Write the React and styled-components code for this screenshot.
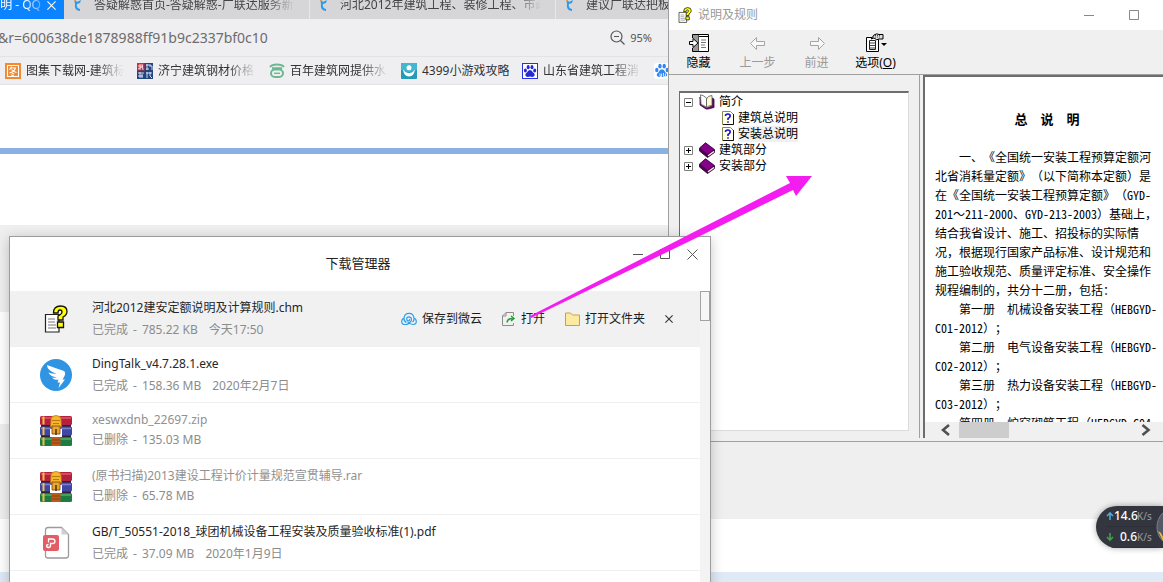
import React from 'react';
import styled, { createGlobalStyle, css } from 'styled-components';

const uiFont = '"Noto Sans", "DejaVu Sans", "Noto Sans CJK SC", sans-serif';
const songFont = '"Noto Sans CJK SC", sans-serif';

const GlobalStyle = createGlobalStyle`
  * { box-sizing: border-box; }
  body { margin: 0; font: 12px/16px ${uiFont}; color: #333; overflow: hidden; }
  button, input { font: inherit; color: inherit; border: 0; padding: 0; margin: 0; background: none; }
  button { cursor: pointer; }
  a { color: inherit; text-decoration: none; }
  svg { display: block; flex: none; }
  h1, h2, p, ul { margin: 0; padding: 0; font-size: inherit; font-weight: inherit; }
  ul { list-style: none; }
`;

const Desktop = styled.div`
  position: relative;
  height: 100vh;
  overflow: hidden;
  background: #fff;
`;

/* ---------- browser ---------- */
const Browser = styled.main`
  display: flex;
  flex-direction: column;
  height: 100%;
`;

const TabBar = styled.nav`
  display: flex;
  align-items: flex-end;
  height: 19px;
  flex: none;
  overflow: hidden;
  background: #d6d6d8;
`;

const fade = css`
  overflow: hidden;
  white-space: nowrap;
  mask-image: linear-gradient(to right, #000 calc(100% - 28px), transparent);
`;

const Tab = styled.a`
  display: flex;
  align-items: center;
  flex: none;
  gap: 11px;
  width: 246px;
  height: 28px;
  padding: 0 14px 0 9px;
  border-right: 1px solid #e8e8ea;
  color: #444;
  span { ${fade} flex: 1; }
`;

const ActiveTab = styled.div`
  display: flex;
  align-items: center;
  justify-content: flex-end;
  flex: none;
  gap: 6px;
  width: 64px;
  height: 28px;
  padding-right: 8px;
  background: #0c84ff;
  color: #fff;
  white-space: nowrap;
  span { mask-image: linear-gradient(to right, #000 60%, rgba(0, 0, 0, 0.3)); }
`;

const AddressBar = styled.div`
  display: flex;
  align-items: center;
  flex: none;
  height: 38px;
  padding-right: 511px;
  background: #efeff2;
  border-bottom: 1px solid #e3e3e6;
`;

const AddressInput = styled.input`
  flex: 1;
  min-width: 0;
  margin-left: -2px;
  font-size: 14px;
  line-height: 20px;
  color: #6c6c6c;
`;

const ZoomButton = styled.button`
  display: flex;
  align-items: center;
  gap: 5px;
  font-size: 11px;
  color: #555;
`;

const BookmarkBar = styled.nav`
  display: flex;
  align-items: center;
  flex: none;
  gap: 13px;
  height: 28px;
  padding-left: 5px;
  background: #efeff2;
  border-bottom: 1px solid #e3e3e6;
`;

const Bookmark = styled.a`
  display: flex;
  align-items: center;
  flex: none;
  gap: 5px;
  width: ${(p) => (p.$short ? '108px' : '119px')};
  span {
    flex: 1;
    overflow: hidden;
    white-space: nowrap;
    ${(p) => !p.$short && fade}
  }
`;

const Band = styled.div`
  flex: none;
  height: ${(p) => p.$h}px;
  background: ${(p) => p.$color};
`;

const LastBand = styled.div`
  flex: 1;
  background: #dfeaf6;
`;

/* ---------- help window ---------- */
const HelpWindow = styled.section`
  position: absolute;
  top: 0;
  right: 0;
  bottom: 140px;
  width: 495px;
  display: flex;
  flex-direction: column;
  background: #f0f0f0;
  border-left: 1px solid #a0a0a0;
  border-bottom: 1px solid #a0a0a0;
  color: #000;
`;

const HelpTitle = styled.header`
  display: flex;
  align-items: center;
  flex: none;
  gap: 5px;
  height: 30px;
  padding: 0 23px 0 8px;
  background: #fff;
  color: #999;
  h2 { flex: 1; }
`;

const WindowControls = styled.div`
  display: flex;
  gap: ${(p) => p.$gap}px;
`;

const Toolbar = styled.div`
  display: flex;
  flex: none;
  height: 45px;
  border-bottom: 1px solid #a0a0a0;
`;

const ToolButton = styled.button`
  display: flex;
  flex-direction: column;
  align-items: center;
  gap: 2px;
  width: 59px;
  padding-top: 3px;
  color: #000;
  white-space: nowrap;
  &:disabled { color: #9a9a9a; }
`;

const HelpBody = styled.div`
  display: flex;
  flex: 1;
  min-height: 0;
  padding-bottom: 3px;
`;

const TreePane = styled.div`
  display: flex;
  flex: none;
  width: 250px;
  padding: 16px 10px 7px;
`;

const Tree = styled.ul`
  flex: 1;
  background: #fff;
  padding: 1px 0 0 4px;
  border: 1px solid #dcdcdc;
  border-top: 2px solid #6d6d6d;
  border-left: 1px solid #6d6d6d;
`;

const TreeRow = styled.li`
  display: flex;
  align-items: center;
  gap: 4px;
  height: 16px;
  padding-left: ${(p) => (p.$child ? '38px' : '0')};
`;

const TreeLink = styled.a`
  line-height: 16px;
  background: ${(p) => (p.$selected ? '#f0f0f0' : 'transparent')};
`;

const Expander = styled.button`
  display: block;
  margin-right: 2px;
`;

const DocPane = styled.div`
  display: flex;
  flex-direction: column;
  flex: 1;
  min-width: 0;
  border-left: 1px solid #a0a0a0;
  padding-left: 3px;
`;

const DocFrame = styled.div`
  display: flex;
  flex-direction: column;
  flex: 1;
  min-height: 0;
  background: #fff;
  border-top: 2px solid #6d6d6d;
  border-left: 2px solid #6d6d6d;
`;

const Doc = styled.article`
  flex: 1;
  min-height: 0;
  overflow: hidden;
  padding: 32px 4px 0 10px;
  font-family: ${songFont};
  text-spacing-trim: space-all;
  line-height: 19px;
  white-space: nowrap;
  h1 { margin-bottom: 19px; font-size: 13px; font-weight: bold; text-align: center; }
  p { white-space: pre; }
`;

const Code = styled.span`
  font-feature-settings: "hwid";
`;

const DocScroll = styled.div`
  display: flex;
  align-items: center;
  flex: none;
  height: 16px;
  padding: 0 12px 0 16px;
  background: #f0f0f0;
`;

const ScrollTrack = styled.div`
  flex: 1;
  padding-left: 8px;
`;

const ScrollThumb = styled.div`
  width: 50px;
  height: 16px;
  background: #cdcdcd;
`;

/* ---------- download manager ---------- */
const DownloadWindow = styled.section`
  position: absolute;
  top: 236px;
  left: 9px;
  right: 452px;
  bottom: -20px;
  display: flex;
  flex-direction: column;
  overflow: hidden;
  background: #fff;
  border: 1px solid #9c9c9c;
  box-shadow: 0 2px 12px rgba(0, 0, 0, 0.22);
`;

const DownloadTitle = styled.header`
  display: grid;
  grid-template-columns: 1fr auto 1fr;
  flex: none;
  height: 54px;
  padding: 0 12px 2px 8px;
  h2 { grid-column: 2; align-self: center; font-size: 13px; color: #222; }
  ${WindowControls} { justify-self: end; padding-top: 11px; height: 23px; }
`;

const DownloadBody = styled.div`
  display: flex;
  flex: 1;
  min-height: 0;
`;

const List = styled.ul`
  flex: 1;
  min-width: 0;
`;

const ListScroll = styled.div`
  width: 10px;
  flex: none;
  background: #f3f3f3;
`;

const ListThumb = styled.div`
  height: 30px;
  background: #f6f6f6;
  border: 1px solid #a3a3a3;
`;

const Row = styled.li`
  display: flex;
  align-items: center;
  height: 56px;
  padding: 0 27px 0 29px;
  gap: 19px;
  background: ${(p) => (p.$active ? '#f1f1f1' : '#fff')};
  border-bottom: 1px solid #f0f0f0;
  white-space: nowrap;
`;

const FileIcon = styled.div`
  display: flex;
  justify-content: center;
  width: 34px;
  flex: none;
`;

const FileText = styled.div`
  flex: 1;
  min-width: 0;
  align-self: flex-start;
  padding-top: 7px;
`;

const FileName = styled.p`
  line-height: 20px;
  color: ${(p) => (p.$deleted ? '#919191' : '#262626')};
`;

const FileMeta = styled.p`
  display: flex;
  gap: 11px;
  line-height: ${(p) => (p.$deleted ? '20px' : '24px')};
  color: #8c8c8c;
`;

const FileState = styled.span`
  display: flex;
  gap: 5px;
`;

const Actions = styled.div`
  display: flex;
  align-items: center;
  gap: 20px;
`;

const Action = styled.button`
  display: flex;
  align-items: center;
  gap: 5px;
  color: #1c1c1c;
`;

/* ---------- overlays ---------- */
const SpeedBall = styled.aside`
  position: absolute;
  right: 0;
  bottom: 34px;
  display: flex;
  width: 67px;
  height: 42px;
  overflow: hidden;
  border-radius: 21px 0 0 21px;
  background: #33363f;
  box-shadow: 0 0 6px rgba(0, 0, 0, 0.35);
`;

const Speeds = styled.div`
  flex: 1;
  padding-left: 10px;
`;

const Speed = styled.div`
  display: flex;
  align-items: center;
  height: 21px;
  border-bottom: 1px solid #2c2f37;
  font-size: 12px;
  color: #fff;
  b { width: 23px; font-weight: 500; text-align: right; }
  small { font-size: 10px; color: #9a9ca3; }
`;

const ArrowMark = styled.svg`
  position: absolute;
  top: 174px;
  left: 528px;
  pointer-events: none;
`;

/* ---------- icons ---------- */
const TabIcon = () => (
  <svg width="10" height="14" viewBox="0 0 10 14">
    <path d="M1 0 L4 4 L8 2 L7 5 L4 6 Q3 10 7 11 L7 13 Q1 13 2 6 Z" fill="#2e9bea" />
    <path d="M0 0 L3 2 L2 4Z" fill="#f0a03c" />
  </svg>
);

const ChmIcon = ({ size }) => (
  <svg width={size} height={size} viewBox="0 0 24 28">
    <path d="M1.500 9.500 H15 V27 H1.500Z" fill="#fff" stroke="#222" strokeWidth="1.200" />
    <path d="M4 14h7M4 17h7M4 20h8M4 23h8" stroke="#777" strokeWidth="1" />
    <path d="M9.500 8 Q9.500 1 16.500 1 Q23 1 23 6.500 Q23 10 19 12 V15 H14 V11 Q18 9 18 7 Q18 5 16 5 Q14 5 14 8Z M13.500 17 H19.500 V22.500 H13.500Z" fill="#ff0" stroke="#111" strokeWidth="1.300" />
  </svg>
);

const PawShape = ({ color }) => (
  <g fill={color}>
    <ellipse cx="3.400" cy="7.500" rx="1.500" ry="2" />
    <ellipse cx="6.200" cy="4.200" rx="1.500" ry="2.100" />
    <ellipse cx="10" cy="4.200" rx="1.500" ry="2.100" />
    <ellipse cx="12.700" cy="7.500" rx="1.500" ry="2" />
    <path d="M8 7 Q10 7 11 9.500 Q13.500 11 12.300 13 Q11 14.500 8 13.600 Q5 14.500 3.700 13 Q2.600 11 5 9.500 Q6 7 8 7Z" />
  </g>
);

const bookmarkIcons = {
  tu: (
    <svg width="16" height="16" viewBox="0 0 16 16">
      <rect width="16" height="16" fill="#f08a32" />
      <path d="M2.500 2.500h11v11h-11z M6.500 3.500 L4.500 7 M6 5h4.500 Q9 9 4.500 10 M6.500 6.500 Q8.500 9 11.500 9.500 M7 10l2 1 M6 11.800l3 1.200" fill="none" stroke="#fff" strokeWidth="1.100" />
    </svg>
  ),
  steel: (
    <svg width="16" height="16" viewBox="0 0 16 16">
      <rect width="16" height="16" fill="#22457f" />
      <rect width="7.500" height="7.500" fill="#d02a3c" />
      <path d="M1 3h5M3 1v6M5 1l1 6M1 6l4-2M9 2h5M10 1v6M12 3h3v4M9 6h3M1 10h6M3 9v6M5 11v4M1 13h5M9 10h6M10 9v6M13 9v4l2 2" stroke="#fff" strokeWidth=".8" fill="none" />
    </svg>
  ),
  bai: (
    <svg width="16" height="16" viewBox="0 0 16 16">
      <path d="M1 4 Q3 1.500 8 1.500 Q13 1.500 15 4 M3 5.200 H13" fill="none" stroke="#6db791" strokeWidth="2" />
      <rect x="2" y="6.500" width="12" height="7.500" rx="3.700" fill="none" stroke="#6db791" strokeWidth="2" />
      <path d="M5 10.300h6" stroke="#6db791" strokeWidth="1.400" />
    </svg>
  ),
  game: (
    <svg width="16" height="16" viewBox="0 0 16 16">
      <rect width="16" height="16" rx="1" fill="#2599b8" />
      <path d="M0 0h16v7q-8 4-16 0z" fill="#45b6cf" />
      <circle cx="8" cy="4.800" r="2.500" fill="#fff" />
      <path d="M2 6.500 Q3 13.500 8 13.500 Q13 13.500 14 6.500 Q11.500 10 8 10 Q4.500 10 2 6.500Z" fill="#fff" />
    </svg>
  ),
  paw: (
    <svg width="16" height="16" viewBox="0 0 16 16">
      <rect x=".5" y=".5" width="15" height="15" fill="#fff" stroke="#2932e1" />
      <PawShape color="#2329d6" />
    </svg>
  ),
  paw2: (
    <svg width="16" height="16" viewBox="0 0 16 16">
      <rect width="16" height="16" rx="3" fill="#fff" />
      <g transform="translate(-1 -1.500) scale(1.120)"><PawShape color="#3388f0" /></g>
      <path d="M6 10.500v3h1.500v-3M9.500 10v3.500h2v-3" stroke="#fff" fill="none" strokeWidth=".8" />
    </svg>
  ),
};

const Minus = ({ color = '#888' }) => (
  <svg width="11" height="11" viewBox="0 0 11 11"><path d="M0 5.500h10" stroke={color} /></svg>
);
const Square = ({ color = '#888' }) => (
  <svg width="11" height="11" viewBox="0 0 11 11"><path d="M.5 .5h9v9h-9z" fill="none" stroke={color} /></svg>
);
const Cross = ({ size = 11, color = '#555', width = 1 }) => (
  <svg width={size} height={size} viewBox="0 0 11 11">
    <path d="M.5 .5l10 10M10.500 .5l-10 10" stroke={color} strokeWidth={width} />
  </svg>
);

const HideIcon = () => (
  <svg width="20" height="20" viewBox="0 0 20 20">
    <path d="M3.500 5V1.500h16v17h-16V15" fill="#fff" stroke="#000" />
    <path d="M4 3.500h15M9.500 2v16" stroke="#000" />
    <path d="M4 2h5.500v16H4z" fill="#999" />
    <path d="M12 7h5M12 9.500h5M12 12h4M12 14.500h5" stroke="#777" />
    <path d="M.5 8.500h3.500V5.500l5 4.500-5 4.500v-3H.5z" fill="#fff" stroke="#000" />
  </svg>
);
const ArrowIcon = ({ flip }) => (
  <svg width="20" height="20" viewBox="0 0 20 20">
    <path transform={flip ? 'translate(20 0) scale(-1 1)' : undefined} d="M2.500 10.500 L8.500 4.500 V8.500 H16.500 V12.500 H8.500 V16.500Z" fill="#f8f8f8" stroke="#a4a4a4" />
  </svg>
);
const OptionsIcon = () => (
  <svg width="22" height="20" viewBox="0 0 22 20">
    <path d="M1.500 4.500h12v14h-12z" fill="#fff" stroke="#000" />
    <path d="M4.500 7.500h6v9h-6z" fill="#fff" stroke="#222" />
    <path d="M5 10h5M5 12.500h5M5 15h5" stroke="#444" />
    <path d="M6 6 L9 2 Q12 0 14 1.500 L18 1.500 V6 H14 Q12 8 9 5Z" fill="#ddd" stroke="#000" />
    <path d="M8 4h7M10 2.500h6" stroke="#555" strokeDasharray="1 1" />
    <path d="M16 10h6l-3 3z" fill="#000" />
  </svg>
);

const BoxIcon = ({ open }) => (
  <svg width="9" height="9" viewBox="0 0 9 9">
    <path d="M.5 .5h8v8h-8z" fill="#fff" stroke="#808080" />
    <path d={open ? 'M2 4.500h5' : 'M2 4.500h5M4.500 2v5'} stroke="#000" />
  </svg>
);
const OpenBook = () => (
  <svg width="16" height="16" viewBox="0 0 16 16">
    <path d="M1 3 V11 L7 15 H9 L15 13.500 V5 L13 4 V12 L8 14 L3 11.500Z" fill="#7a007a" stroke="#400040" strokeWidth=".8" />
    <path d="M1.500 .8 Q4 1 7.500 4 V13.500 Q5 11 2 10.500Z" fill="#fff" stroke="#555" strokeWidth=".8" />
    <path d="M7.500 5 Q9 1.500 13 1.500 V11.500 Q9.500 11.500 7.500 13.500Z" fill="#fffbd0" stroke="#555" strokeWidth=".8" />
  </svg>
);
const ClosedBook = () => (
  <svg width="16" height="16" viewBox="0 0 16 16">
    <path d="M.5 6 L6.500 .8 L15.500 7.500 V10.500 L8.500 15.500 L.5 9Z" fill="#4b004b" stroke="#2a002a" strokeWidth=".8" />
    <path d="M1 6 L6.500 1.200 L15 7.500 L8.500 12Z" fill="#86008a" />
    <path d="M9 13.800 L15 9.500" stroke="#fff" strokeWidth="1.300" />
  </svg>
);
const TopicIcon = () => (
  <svg width="12" height="14" viewBox="0 0 12 14">
    <path d="M.5 .5h8l3 3v10h-11z" fill="#fffff0" stroke="#8a8a50" />
    <path d="M11.500 3v10.500H1" fill="none" stroke="#111" />
    <path d="M3.500 5 Q3.500 3 5.800 3 Q8.200 3 8.200 5 Q8.200 6.500 6 7.500V9M6 10.200v1.600" fill="none" stroke="#1414c8" strokeWidth="1.600" />
  </svg>
);
const Chevron = ({ right }) => (
  <svg width="10" height="12" viewBox="0 0 10 12">
    <path d={right ? 'M1.500 1 L7.500 6 L1.500 11' : 'M8 1 L2 6 L8 11'} fill="none" stroke="#505050" strokeWidth="2.600" />
  </svg>
);

const DingIcon = () => (
  <svg width="34" height="34" viewBox="0 0 34 34">
    <circle cx="17" cy="17" r="16" fill="#2f95e3" />
    <path d="M8 7 Q16 10 25 13 Q27 14.500 25.500 18 L23.500 21.500 H26 L19.500 30 L21 24.500 H18.500 L19.500 21.500 Q15 22.500 13 19.500 Q16 20 18 19.200 Q11 18.500 9.500 14.500 Q13 16 17.500 15.800 Q8 12.500 8 7Z" fill="#fff" />
  </svg>
);
const ArchiveIcon = () => (
  <svg width="34" height="32" viewBox="0 0 34 32">
    <rect x="2" y="2" width="30" height="28" fill="#33202f" />
    <rect x="1" y="1" width="32" height="9" rx="1.500" fill="#b5203c" />
    <path d="M2 3h30" stroke="#e0596b" strokeWidth="1.500" />
    <rect x="1" y="11.500" width="32" height="9" rx="1.500" fill="#4046a4" />
    <path d="M2 13.500h30" stroke="#7b80d2" strokeWidth="1.500" />
    <rect x="1" y="22" width="32" height="9" rx="1.500" fill="#1e7c42" />
    <path d="M2 24h30" stroke="#50ad6c" strokeWidth="1.500" />
    <path d="M4.500 1.500v8M4.500 12v8M4.500 22.500v8" stroke="#f2bf43" strokeWidth="2" />
    <path d="M12.500 1h9v30h-9z" fill="#bb5a1c" />
    <path d="M12 4 Q12.500 .5 17 .5 Q21.500 .5 22 4 L22.500 12 H11.500Z" fill="#f3b62c" stroke="#b87413" strokeWidth=".7" />
    <path d="M13 5.500h8M14 8.500h6" stroke="#b9770f" />
    <path d="M11 14h2.500v5h7v-5H23v8H11z" fill="#fff" />
    <path d="M13 11h8v8h-8z" fill="#e9a62a" stroke="#7a4312" strokeWidth=".8" />
    <path d="M17 14v6" stroke="#5c3312" strokeWidth="1.600" />
    <path d="M13 25h8M13 28h8" stroke="#91400e" />
  </svg>
);
const PdfIcon = () => (
  <svg width="28" height="34" viewBox="0 0 28 34">
    <path d="M3.500 4 Q3.500 1.500 6 1.500 H19.500 L26.500 8.500 V29.500 Q26.500 32 24 32 H6 Q3.500 32 3.500 29.500Z" fill="#fff" stroke="#9b9b9b" strokeWidth="1.300" />
    <path d="M19.500 1.500 V8.500 H26.500Z" fill="#d0d0d0" />
    <rect x="1" y="9" width="16" height="16" rx="2" fill="#e35d66" />
    <path d="M6.500 16.500 V13 H10.500 Q13 13 13 15.300 Q13 17.500 10.500 17.500 H8.500 V19.500 Q8.500 21.500 6.500 21.500 Q4.500 21.500 4.500 19.800 Q4.500 18.500 6.500 18.500" fill="none" stroke="#fff" strokeWidth="1.300" />
  </svg>
);
const CloudIcon = () => (
  <svg width="16" height="14" viewBox="0 0 16 14">
    <path d="M4 12.500 Q.7 12.500 .7 9.500 Q.7 7 3 6.300 Q3.300 1.300 8 1.300 Q12.700 1.300 13 6.300 Q15.300 7 15.300 9.500 Q15.300 12.500 12 12.500 Q9 12.500 6.500 9.700 M4 12.500 Q8 12.500 10.300 8.600 Q11 5 8 4.800 Q5.500 5 5.700 7.300 Q6 9 8 8.700 Q9 8.300 8.500 7 M3 6.300 Q2.800 9.300 5.500 10.500 M13 6.300 Q13.300 8.500 11.500 10" fill="none" stroke="#2f9fe8" strokeWidth="1.200" />
  </svg>
);
const OpenFileIcon = () => (
  <svg width="14" height="14" viewBox="0 0 14 14">
    <path d="M11.500 4V.5H4L.5 4v9.500h11V11M4 .5V4H.5" fill="none" stroke="#8c8c8c" />
    <path d="M5 10.500 Q5.500 6.500 10.500 6.500 M9 4 L12 6.500 L9 9" fill="none" stroke="#1f9b34" strokeWidth="1.400" />
  </svg>
);
const FolderIcon = () => (
  <svg width="15" height="14" viewBox="0 0 15 14">
    <path d="M.5 1h5l2 2h7v10.500H.5z" fill="#fdeaa2" stroke="#c9a23f" />
  </svg>
);
const SpeedArrow = ({ down }) => (
  <svg width="8" height="10" viewBox="0 0 8 10">
    <path d={down ? 'M4 1v7M1 5l3 3 3-3' : 'M4 9V2M1 5l3-3 3 3'} fill="none" stroke={down ? '#3fa34a' : '#4fa8dc'} strokeWidth="1.600" />
  </svg>
);

/* ---------- data ---------- */
const tabs = ['答疑解惑首页-答疑解惑-广联达服务新', '河北2012年建筑工程、装修工程、市政', '建议广联达把板'];

const bookmarks = [
  { icon: 'tu', text: '图集下载网-建筑标' },
  { icon: 'steel', text: '济宁建筑钢材价格' },
  { icon: 'bai', text: '百年建筑网提供水' },
  { icon: 'game', text: '4399小游戏攻略', short: true },
  { icon: 'paw', text: '山东省建筑工程消' },
  { icon: 'paw2', text: '' },
];

const files = [
  { icon: <ChmIcon size={28} />, name: '河北2012建安定额说明及计算规则.chm', state: '已完成', size: '785.22 KB', date: '今天17:50', active: true },
  { icon: <DingIcon />, name: 'DingTalk_v4.7.28.1.exe', state: '已完成', size: '158.36 MB', date: '2020年2月7日' },
  { icon: <ArchiveIcon />, name: 'xeswxdnb_22697.zip', state: '已删除', size: '135.03 MB', deleted: true },
  { icon: <ArchiveIcon />, name: '(原书扫描)2013建设工程计价计量规范宣贯辅导.rar', state: '已删除', size: '65.78 MB', deleted: true },
  { icon: <PdfIcon />, name: 'GB∕T_50551-2018_球团机械设备工程安装及质量验收标准(1).pdf', state: '已完成', size: '37.09 MB', date: '2020年1月9日' },
];

const intro = `　　一、《全国统一安装工程预算定额河
北省消耗量定额》（以下简称本定额）是
在《全国统一安装工程预算定额》（GYD-
201～211-2000、GYD-213-2003）基础上，
结合我省设计、施工、招投标的实际情
况，根据现行国家产品标准、设计规范和
施工验收规范、质量评定标准、安全操作
规程编制的，共分十二册，包括：`;

const volumes = [
  '　　第一册　机械设备安装工程（HEBGYD-\nC01-2012）；',
  '　　第二册　电气设备安装工程（HEBGYD-\nC02-2012）；',
  '　　第三册　热力设备安装工程（HEBGYD-\nC03-2012）；',
  '　　第四册　炉窑砌筑工程（HEBGYD-C04-',
];

/* Sets Latin runs in half-width forms. */
const Paragraph = ({ text }) => (
  <p>
    {text.split(/([A-Z0-9-]+)/).map((part, i) => (i % 2 ? <Code key={i}>{part}</Code> : part))}
  </p>
);

export default function App() {
  return (
    <>
      <GlobalStyle />
      <Desktop>
        <Browser>
          <TabBar>
            <ActiveTab>
              <span>明 - QQ</span>
              <button aria-label="关闭标签页"><Cross size={9} color="#fff" width={1.3} /></button>
            </ActiveTab>
            {tabs.map((t) => (
              <Tab href="#" key={t}><TabIcon /><span>{t}</span></Tab>
            ))}
          </TabBar>
          <AddressBar>
            <AddressInput aria-label="地址" defaultValue="&r=600638de1878988ff91b9c2337bf0c10" />
            <ZoomButton>
              <svg width="15" height="15" viewBox="0 0 15 15">
                <circle cx="6.500" cy="6.500" r="5.500" fill="none" stroke="#555" strokeWidth="1.200" />
                <path d="M4 6.500h5M10.500 10.500l4 4" stroke="#555" strokeWidth="1.200" />
              </svg>
              95%
            </ZoomButton>
          </AddressBar>
          <BookmarkBar>
            {bookmarks.map((b) => (
              <Bookmark href="#" key={b.icon} $short={b.short} aria-label={b.text || '百度'}>
                {bookmarkIcons[b.icon]}
                <span>{b.text}</span>
              </Bookmark>
            ))}
          </BookmarkBar>
          <Band $h={63} $color="#fff" />
          <Band $h={6} $color="#8ab1e4" />
          <Band $h={71} $color="#fff" />
          <Band $h={87} $color="#efefef" />
          <Band $h={112} $color="#fff" />
          <Band $h={95} $color="#efefef" />
          <Band $h={53} $color="#fff" />
          <LastBand />
        </Browser>

        <HelpWindow>
          <HelpTitle>
            <ChmIcon size={16} />
            <h2>说明及规则</h2>
            <WindowControls $gap={34}>
              <button aria-label="最小化"><Minus /></button>
              <button aria-label="最大化"><Square /></button>
            </WindowControls>
          </HelpTitle>
          <Toolbar>
            <ToolButton><HideIcon />隐藏</ToolButton>
            <ToolButton disabled><ArrowIcon />上一步</ToolButton>
            <ToolButton disabled><ArrowIcon flip />前进</ToolButton>
            <ToolButton><OptionsIcon /><span>选项(<u>O</u>)</span></ToolButton>
          </Toolbar>
          <HelpBody>
            <TreePane>
              <Tree>
                <TreeRow><Expander aria-label="折叠"><BoxIcon open /></Expander><OpenBook /><TreeLink href="#">简介</TreeLink></TreeRow>
                <TreeRow $child><TopicIcon /><TreeLink href="#">建筑总说明</TreeLink></TreeRow>
                <TreeRow $child><TopicIcon /><TreeLink href="#" $selected>安装总说明</TreeLink></TreeRow>
                <TreeRow><Expander aria-label="展开"><BoxIcon /></Expander><ClosedBook /><TreeLink href="#">建筑部分</TreeLink></TreeRow>
                <TreeRow><Expander aria-label="展开"><BoxIcon /></Expander><ClosedBook /><TreeLink href="#">安装部分</TreeLink></TreeRow>
              </Tree>
            </TreePane>
            <DocPane>
              <DocFrame>
                <Doc>
                  <h1>总　说　明</h1>
                  <Paragraph text={intro} />
                  {volumes.map((v) => <Paragraph key={v} text={v} />)}
                </Doc>
                <DocScroll>
                  <button aria-label="向左滚动"><Chevron /></button>
                  <ScrollTrack><ScrollThumb /></ScrollTrack>
                  <button aria-label="向右滚动"><Chevron right /></button>
                </DocScroll>
              </DocFrame>
            </DocPane>
          </HelpBody>
        </HelpWindow>

        <DownloadWindow>
          <DownloadTitle>
            <h2>下载管理器</h2>
            <WindowControls $gap={16}>
              <button aria-label="最小化"><Minus color="#555" /></button>
              <button aria-label="最大化"><Square color="#555" /></button>
              <button aria-label="关闭"><Cross /></button>
            </WindowControls>
          </DownloadTitle>
          <DownloadBody>
            <List>
              {files.map((f) => (
                <Row key={f.name} $active={f.active}>
                  <FileIcon>{f.icon}</FileIcon>
                  <FileText>
                    <FileName $deleted={f.deleted}>{f.name}</FileName>
                    <FileMeta $deleted={f.deleted}>
                      <FileState><span>{f.state}</span><span>-</span><span>{f.size}</span></FileState>
                      {f.date && <span>{f.date}</span>}
                    </FileMeta>
                  </FileText>
                  {f.active && (
                    <Actions>
                      <Action><CloudIcon />保存到微云</Action>
                      <Action><OpenFileIcon />打开</Action>
                      <Action><FolderIcon />打开文件夹</Action>
                      <Action aria-label="移除"><Cross size={8} color="#333" width={1.5} /></Action>
                    </Actions>
                  )}
                </Row>
              ))}
            </List>
            <ListScroll><ListThumb /></ListScroll>
          </DownloadBody>
        </DownloadWindow>

        <SpeedBall>
          <Speeds>
            <Speed><SpeedArrow /><b>14.6</b><small>K/s</small></Speed>
            <Speed><SpeedArrow down /><b>0.6</b><small>K/s</small></Speed>
          </Speeds>
          <svg width="7" height="42" viewBox="0 0 7 42">
            <circle cx="21" cy="21" r="20" fill="#555963" stroke="#7b7f89" />
            <path d="M2 25 L7 35 V31 L5 27Z" fill="#f0b64a" />
          </svg>
        </SpeedBall>

        <ArrowMark width="286" height="146" viewBox="0 0 286 146">
          <path d="M2 142 L162 60 L262 9 L258 2 H284 L268 22 L265 16 L162 67 L3 144Z" fill="#f41df0" />
        </ArrowMark>
      </Desktop>
    </>
  );
}
